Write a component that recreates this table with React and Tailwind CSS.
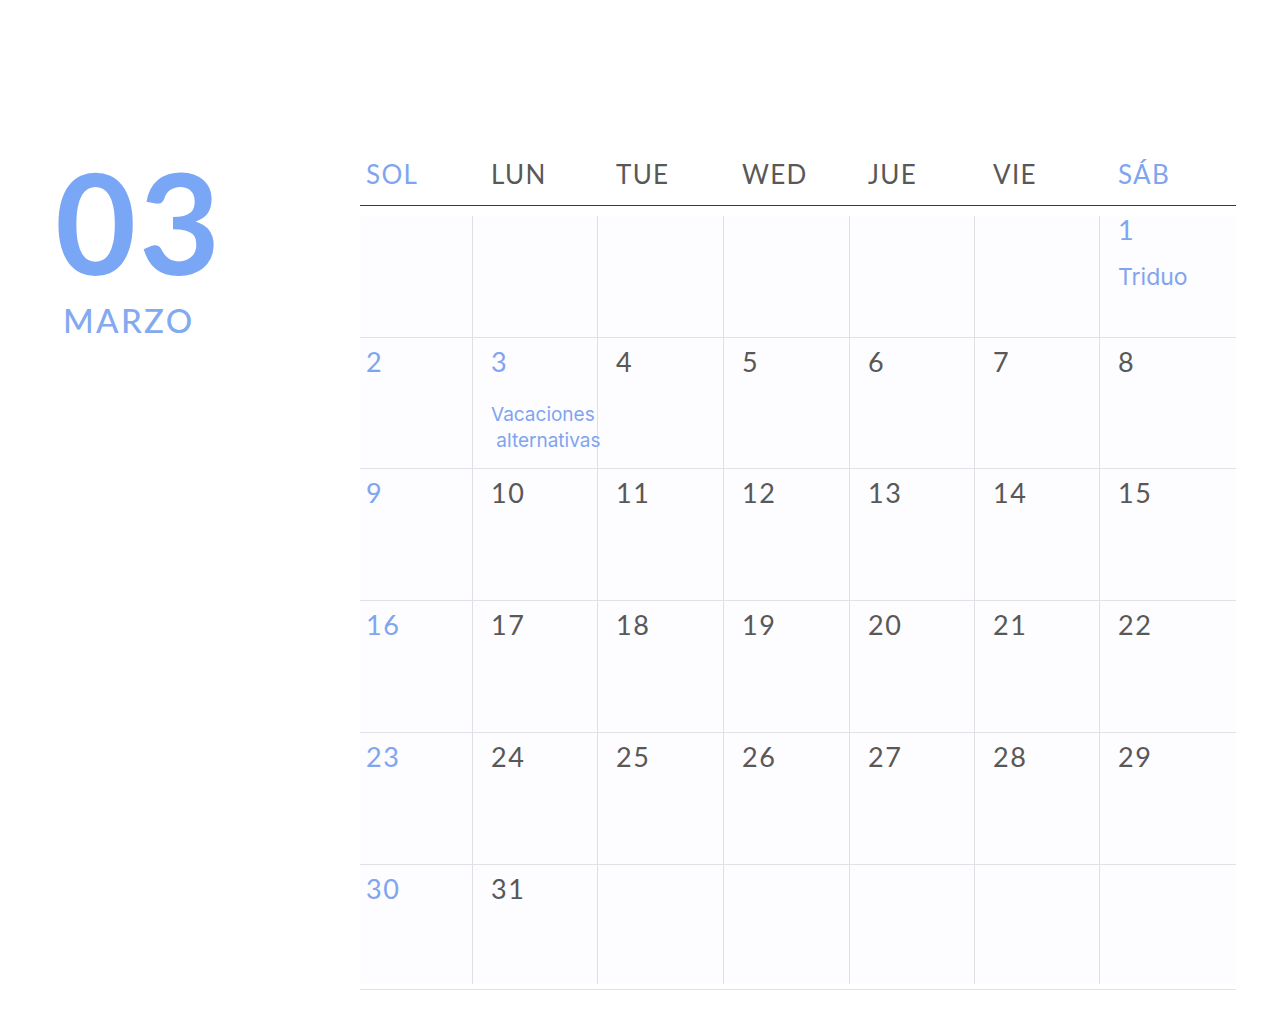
import React from "react";

const BLUE = "text-[#7fa5f0]";
const GRAY = "text-[#585858]";

const labels = [
  { t: "SOL", blue: true },
  { t: "LUN" },
  { t: "TUE" },
  { t: "WED" },
  { t: "JUE" },
  { t: "VIE" },
  { t: "SÁB", blue: true },
];

const weeks = [
  [null, null, null, null, null, null, { d: 1, blue: true, note: "Triduo" }],
  [{ d: 2, blue: true }, { d: 3, blue: true, note2: true }, { d: 4 }, { d: 5 }, { d: 6 }, { d: 7 }, { d: 8 }],
  [{ d: 9, blue: true }, { d: 10 }, { d: 11 }, { d: 12 }, { d: 13 }, { d: 14 }, { d: 15 }],
  [{ d: 16, blue: true }, { d: 17 }, { d: 18 }, { d: 19 }, { d: 20 }, { d: 21 }, { d: 22 }],
  [{ d: 23, blue: true }, { d: 24 }, { d: 25 }, { d: 26 }, { d: 27 }, { d: 28 }, { d: 29 }],
  [{ d: 30, blue: true }, { d: 31 }, null, null, null, null, null],
];

const rowOuter = [
  "h-[132px] pt-[10px]",
  "h-[131px]",
  "h-[132px]",
  "h-[132px]",
  "h-[132px]",
  "h-[125px] pb-[5px]",
];

function Cell({ cell, col, row }) {
  const padL = col === 0 ? "pl-[6px]" : "pl-[18px]";
  const borderL = col === 0 ? "" : "border-l border-[#e1dee6]";
  const padT = row === 0 ? "pt-0" : "pt-[10px]";
  const z = cell && cell.note2 ? "z-10" : "z-0";
  return (
    <div className={`${rowOuter[row]} border-b border-[#e3e0e7] flex flex-col relative ${z}`}>
      <div className={`flex-1 ${borderL} ${padL} ${padT} bg-[#fdfcfe]`}>
        {cell && (
          <>
            <div
              className={`text-[27px] leading-none tracking-[0.06em] ${cell.blue ? BLUE : GRAY}`}
              style={{ fontFamily: "Lato, 'Noto Sans', sans-serif" }}
            >
              {cell.d}
            </div>
            {cell.note && (
              <div
                className={`mt-[21px] text-[23px] leading-[1.2] ${BLUE}`}
                style={{ fontFamily: "Inter, 'Noto Sans', sans-serif" }}
              >
                {cell.note}
              </div>
            )}
            {cell.note2 && (
              <div
                className={`mt-[27px] text-[19px] leading-[26px] whitespace-nowrap ${BLUE}`}
                style={{ fontFamily: "Inter, 'Noto Sans', sans-serif" }}
              >
                Vacaciones
                <br />
                {"\u00a0alternativas"}
              </div>
            )}
          </>
        )}
      </div>
    </div>
  );
}

export default function App() {
  return (
    <div className="w-[1280px] h-[1031px] bg-white flex overflow-hidden">
      <div className="w-[360px] pl-[55px] pt-[151px] flex flex-col">
        <div
          className="h-[140px] text-[140px] leading-none font-bold text-[#7aa6f6] tracking-[0.02em]"
          style={{ fontFamily: "Lato, 'Noto Sans', sans-serif" }}
        >
          03
        </div>
        <div
          className="mt-[13px] ml-[8px] text-[33px] leading-none font-medium text-[#83a9f0] tracking-[0.07em]"
          style={{ fontFamily: "Lato, 'Noto Sans', sans-serif" }}
        >
          MARZO
        </div>
      </div>
      <div className="w-[876px] pt-[150px]">
        <div className="h-[56px] border-b border-[#3a3a3a] grid grid-cols-[112px_125px_126px_126px_125px_125px_137px] pt-[11px]">
          {labels.map((l, i) => (
            <div
              key={l.t}
              className={`${i === 0 ? "pl-[6px]" : "pl-[19px]"} text-[26px] leading-none tracking-[0.05em] ${
                l.blue ? BLUE : GRAY
              }`}
              style={{ fontFamily: "Lato, 'Noto Sans', sans-serif" }}
            >
              {l.t}
            </div>
          ))}
        </div>
        <div className="grid grid-cols-[112px_125px_126px_126px_125px_125px_137px]">
          {weeks.map((w, r) =>
            w.map((c, ci) => <Cell key={`${r}-${ci}`} cell={c} col={ci} row={r} />)
          )}
        </div>
      </div>
    </div>
  );
}
